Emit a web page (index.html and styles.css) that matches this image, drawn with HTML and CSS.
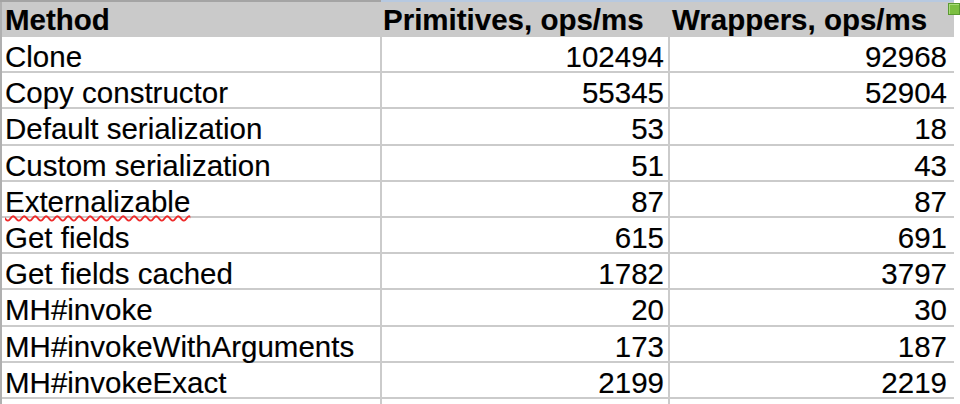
FILE: index.html
```html
<!DOCTYPE html>
<html lang="en">
<head>
<meta charset="utf-8">
<title>Benchmark</title>
<link rel="stylesheet" href="styles.css">
</head>
<body>
<div class="sheet">
  <div class="topbar">
    <div class="tb-left"></div>
    <div class="tb-sel"></div>
  </div>
  <div class="corner"></div>
  <div class="table">
    <div class="row head">
      <div class="cell c1">Method</div>
      <div class="cell c2">Primitives, ops/ms</div>
      <div class="cell c3">Wrappers, ops/ms</div>
    </div>
    <div class="row"><div class="cell c1">Clone</div><div class="cell c2 num">102494</div><div class="cell c3 num">92968</div></div>
    <div class="row"><div class="cell c1">Copy constructor</div><div class="cell c2 num">55345</div><div class="cell c3 num">52904</div></div>
    <div class="row"><div class="cell c1">Default serialization</div><div class="cell c2 num">53</div><div class="cell c3 num">18</div></div>
    <div class="row"><div class="cell c1">Custom serialization</div><div class="cell c2 num">51</div><div class="cell c3 num">43</div></div>
    <div class="row"><div class="cell c1"><span class="spell">Externalizable</span></div><div class="cell c2 num">87</div><div class="cell c3 num">87</div></div>
    <div class="row"><div class="cell c1">Get fields</div><div class="cell c2 num">615</div><div class="cell c3 num">691</div></div>
    <div class="row"><div class="cell c1">Get fields cached</div><div class="cell c2 num">1782</div><div class="cell c3 num">3797</div></div>
    <div class="row"><div class="cell c1">MH#invoke</div><div class="cell c2 num">20</div><div class="cell c3 num">30</div></div>
    <div class="row"><div class="cell c1">MH#invokeWithArguments</div><div class="cell c2 num">173</div><div class="cell c3 num">187</div></div>
    <div class="row"><div class="cell c1">MH#invokeExact</div><div class="cell c2 num">2199</div><div class="cell c3 num">2219</div></div>
    <div class="row"><div class="cell c1"></div><div class="cell c2 num"></div><div class="cell c3 num"></div></div>
  </div>
</div>
</body>
</html>
```
FILE: styles.css
```css
html, body {
  margin: 0;
  padding: 0;
  background: #ffffff;
}
body {
  width: 960px;
  height: 404px;
  overflow: hidden;
  font-family: "Liberation Sans", Arial, sans-serif;
  color: #000;
}
.sheet {
  position: relative;
  width: 960px;
  height: 404px;
  overflow: hidden;
}
.topbar {
  display: flex;
  height: 2px;
  width: 954px;
}
.tb-left {
  width: 381px;
  background: #a4a4a4;
}
.tb-sel {
  flex: 1;
  background: #b7c9e0;
}
.corner {
  position: absolute;
  left: 948px;
  top: 3px;
  width: 10px;
  height: 10px;
  background: #7cbf41;
  border: 1px solid #5a9a30;
  box-shadow: inset 1px 1px 0 #a9dc7a;
}
.table {
  width: 952px;
  border-left: 2px solid #b0b0b0;
}
.row {
  display: grid;
  grid-template-columns: 378px 290px 284px;
}
.cell {
  font-size: 29.5px;
  height: 28.2px;
  line-height: 28.2px;
  padding: 6px 0 0 3px;
  white-space: nowrap;
  border-bottom: 2px solid #cbcbcb;
  -webkit-text-stroke: 0.15px #000;
}
.c1, .c2 {
  border-right: 2px solid #cbcbcb;
}
.c1 { width: 375px; }
.c2 { width: 285px; }
.c3 { width: 281px; }
.num {
  text-align: right;
  padding: 6px 0 0 0;
}
.c2.num { width: 284px; padding-right: 4px; }
.c3.num { width: 277px; padding-right: 7px; }
.head .cell {
  background: #cacaca;
  font-weight: bold;
  height: 35px;
  line-height: 35px;
  padding-top: 0;
  border-bottom: 0;
  border-right-color: #cacaca;
}
.head .c3 {
  width: 282px;
  padding-left: 2px;
}
.spell {
  text-decoration-line: underline;
  text-decoration-style: wavy;
  text-decoration-color: #ee2b2b;
  text-decoration-thickness: 1.6px;
  text-underline-offset: 3px;
}
```
